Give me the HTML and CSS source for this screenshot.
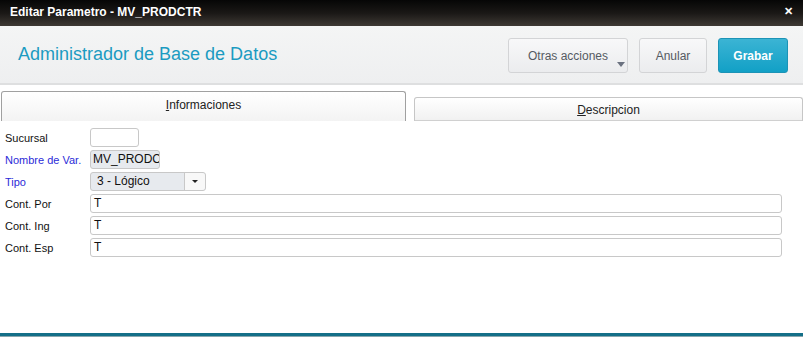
FILE: index.html
```html
<!DOCTYPE html>
<html lang="es">
<head>
    <meta charset="UTF-8">
    <title>Editar Parametro - MV_PRODCTR</title>
    <link rel="stylesheet" href="styles.css">
</head>
<body>
    <div class="dialog">
        <div class="titlebar">
            <span class="title">Editar Parametro - MV_PRODCTR</span>
            <span class="close">&#x2715;</span>
        </div>

        <div class="header">
            <h1>Administrador de Base de Datos</h1>
            <div class="actions">
                <button class="btn btn-more">Otras acciones<span class="caret"></span></button>
                <button class="btn btn-cancel">Anular</button>
                <button class="btn btn-primary">Grabar</button>
            </div>
        </div>

        <div class="tabs">
            <div class="tab active"><u>I</u>nformaciones</div>
            <div class="tab"><u>D</u>escripcion</div>
        </div>

        <div class="form">
            <div class="row">
                <label>Sucursal</label>
                <div class="field f-small"></div>
            </div>
            <div class="row">
                <label class="req">Nombre de Var.</label>
                <div class="field f-name disabled">MV_PRODCT</div>
            </div>
            <div class="row">
                <label class="req">Tipo</label>
                <div class="field f-select">
                    <span class="value">3 - Lógico</span>
                    <span class="arrow"><span class="caret dark"></span></span>
                </div>
            </div>
            <div class="row">
                <label>Cont. Por</label>
                <div class="field f-wide">T</div>
            </div>
            <div class="row">
                <label>Cont. Ing</label>
                <div class="field f-wide">T</div>
            </div>
            <div class="row">
                <label>Cont. Esp</label>
                <div class="field f-wide">T</div>
            </div>
        </div>

        <div class="footer"></div>
    </div>
</body>
</html>
```

FILE: styles.css
```css
body {
    margin: 0;
    font-family: "Liberation Sans", Arial, sans-serif;
    background-color: white;
}
.dialog {
    width: 803px;
    height: 337px;
    display: flex;
    flex-direction: column;
    overflow: hidden;
}
.titlebar {
    height: 26px;
    display: flex;
    align-items: center;
    justify-content: space-between;
    padding: 0 10px;
    background: linear-gradient(to bottom, #060606 0%, #1a1816 50%, #3e3934 100%);
    color: white;
    font-size: 12px;
    font-weight: bold;
    flex-shrink: 0;
}
.titlebar .title {
    margin-top: -2px;
}
.titlebar .close {
    font-size: 11px;
    margin-top: -3px;
}
.header {
    height: 57px;
    display: flex;
    align-items: center;
    justify-content: space-between;
    padding: 0 15px 0 18px;
    background: linear-gradient(to bottom, #f4f5f5, #eeeff0);
    border-bottom: 2px solid #dedfe0;
    flex-shrink: 0;
}
.header h1 {
    margin: 0 0 1px 0;
    font-size: 18px;
    font-weight: normal;
    color: #1b9bc1;
}
.actions {
    display: flex;
    gap: 11px;
    margin-top: 2px;
}
.btn {
    height: 35px;
    padding: 0;
    border: 1px solid #d3d4d6;
    border-radius: 3px;
    background: linear-gradient(to bottom, #f8f8f9, #ebecee);
    color: #555a62;
    font-family: "Liberation Sans", Arial, sans-serif;
    font-size: 12px;
    position: relative;
}
.btn-more {
    width: 120px;
}
.btn-cancel {
    width: 68px;
}
.btn-more .caret {
    position: absolute;
    right: 2px;
    bottom: 5px;
}
.caret {
    display: inline-block;
    width: 0;
    height: 0;
    border-left: 4px solid transparent;
    border-right: 4px solid transparent;
    border-top: 5px solid #6b7280;
}
.btn-primary {
    width: 70px;
    border-color: #1c93b6;
    background: linear-gradient(to bottom, #3bb4d4, #12a0c6);
    color: white;
    font-weight: bold;
}
.tabs {
    display: flex;
    align-items: flex-end;
    gap: 8px;
    padding: 6px 0 0 1px;
    height: 30px;
    flex-shrink: 0;
}
.tab {
    flex: 1;
    text-align: center;
    font-size: 12px;
    color: #222;
    border: 1px solid #c6c6c6;
    border-bottom: 1px solid #d0d0d0;
    border-radius: 3px 3px 0 0;
    background: linear-gradient(to bottom, #ffffff, #f1f1f1);
    height: 22px;
    line-height: 25px;
}
.tab.active {
    flex: none;
    width: 403px;
    height: 29px;
    line-height: 26px;
    border-color: #a0a0a0;
    border-bottom: none;
    background: linear-gradient(to bottom, #ffffff, #f3f3f3);
}
.form {
    flex: 1;
    padding: 7px 0 0 5px;
    display: flex;
    flex-direction: column;
    gap: 3px;
}
.row {
    display: flex;
    align-items: center;
    height: 19px;
}
.row label {
    width: 85px;
    font-size: 11px;
    color: #111;
}
.row label.req {
    color: #2b2bd8;
}
.field {
    box-sizing: border-box;
    height: 19px;
    border: 1px solid #c8c8c8;
    border-radius: 3px;
    background-color: white;
    font-size: 12px;
    line-height: 17px;
    padding: 0 3px;
    color: #111;
}
.f-small {
    width: 49px;
}
.f-name {
    width: 70px;
    padding: 0 1px 0 2px;
    overflow: hidden;
    white-space: nowrap;
}
.disabled {
    background-color: #e7eaee;
}
.f-select {
    width: 116px;
    display: flex;
    padding: 0;
    background: #e7eaee;
}
.f-select .value {
    flex: 1;
    padding-left: 6px;
}
.f-select .arrow {
    width: 20px;
    border-left: 1px solid #c8c8c8;
    background: #f8f8f8;
    display: flex;
    align-items: center;
    justify-content: center;
    border-radius: 0 3px 3px 0;
}
.caret.dark {
    border-left-width: 3px;
    border-right-width: 3px;
    border-top: 3px solid #222;
}
.f-wide {
    width: 692px;
}
.footer {
    height: 4px;
    border-top: 3px solid #146f88;
    background-color: #8aa7ae;
    box-sizing: border-box;
    flex-shrink: 0;
}
```
